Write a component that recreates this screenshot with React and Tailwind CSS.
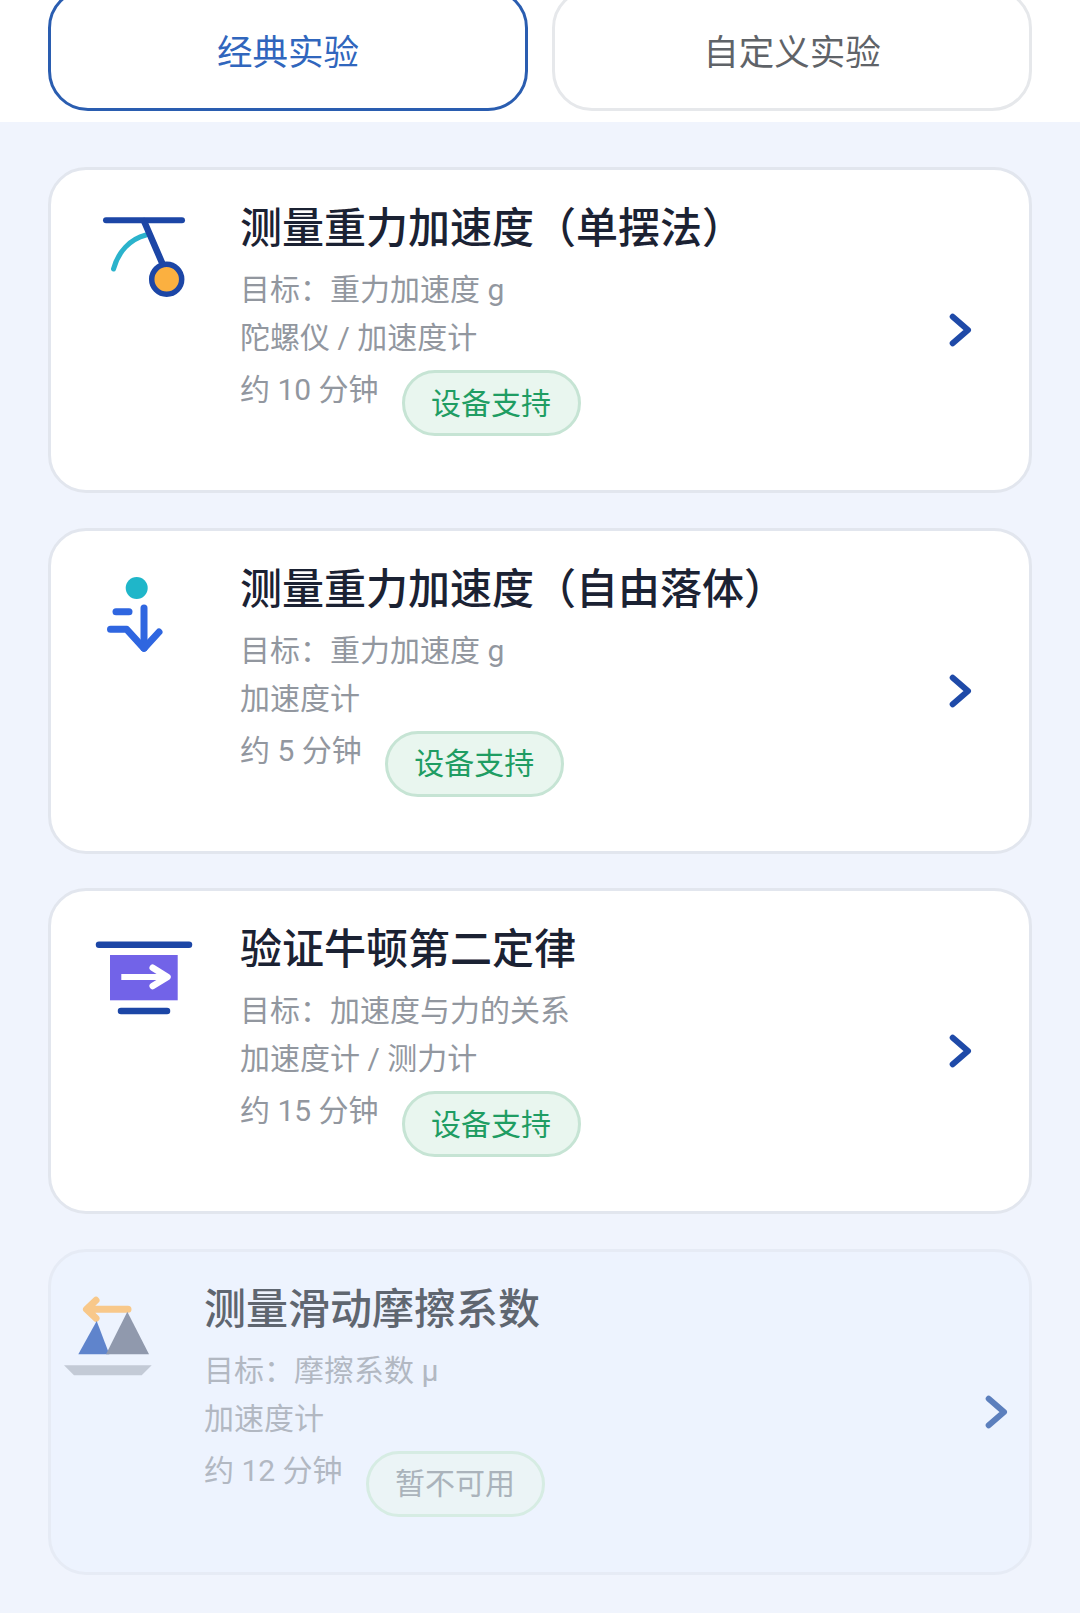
import React from 'react';

const FONT = 'font-[Roboto,"Noto_Sans_CJK_SC",sans-serif]';

const PendulumIcon = () => (
  <svg width="130" height="120" viewBox="0 0 130 120" fill="none" strokeLinecap="round">
    <path d="M33.5 79C38 62 50 49 66 45" stroke="#2bb3cc" strokeWidth="5" />
    <path d="M64 31L83 75" stroke="#1c46a6" strokeWidth="6.5" />
    <path d="M26 30.3H102" stroke="#1c46a6" strokeWidth="6" />
    <circle cx="86.7" cy="89.3" r="15" fill="#fbb040" stroke="#1c46a6" strokeWidth="5.5" />
  </svg>
);

const FreeFallIcon = () => (
  <svg width="130" height="120" viewBox="0 0 130 120" fill="none" strokeLinecap="round" strokeLinejoin="round">
    <circle cx="56.7" cy="37" r="11" fill="#1fb6c9" />
    <path d="M64 57V97" stroke="#2f66e0" strokeWidth="7" />
    <path d="M30.5 78.3H46.7L64 97.3L79 81" stroke="#2f66e0" strokeWidth="7" />
    <path d="M36 60.7H49" stroke="#2f66e0" strokeWidth="7" />
  </svg>
);

const NewtonIcon = () => (
  <svg width="130" height="120" viewBox="0 0 130 120" fill="none" strokeLinecap="round" strokeLinejoin="round">
    <path d="M19 33.7H109" stroke="#1c46a6" strokeWidth="6.5" />
    <rect x="30" y="44" width="67.7" height="45.3" fill="#7263e8" />
    <path d="M41.3 66H87" stroke="#ffffff" strokeWidth="6" strokeLinecap="butt" />
    <path d="M72.7 56.7L87.5 66L72.7 75" stroke="#ffffff" strokeWidth="6.5" />
    <path d="M41 100H87" stroke="#1c46a6" strokeWidth="6.5" />
  </svg>
);

const FrictionIcon = () => (
  <svg width="130" height="120" viewBox="0 0 130 120" fill="none">
    <path d="M77 37.3H36M45 28.3L35.5 37.3L45 46.3" stroke="#f8c88a" strokeWidth="7" strokeLinecap="round" strokeLinejoin="round" />
    <path d="M27.3 82.3L45.7 49L58.3 82.3Z" fill="#5f84cc" />
    <path d="M55 82.3L76.3 39.7L98 82.3Z" fill="#9099ad" />
    <path d="M13 93.3H100.7L90.7 103.3H23Z" fill="#c3cad6" />
  </svg>
);

const Chevron = ({ color }) => (
  <svg width="24" height="36" viewBox="0 0 24 36" fill="none">
    <path d="M4.7 4.7L20 18L4.7 31.3" stroke={color} strokeWidth="6" strokeLinecap="round" strokeLinejoin="round" />
  </svg>
);

const EXPERIMENTS = [
  { id: 'pendulum', title: '测量重力加速度（单摆法）', goal: '目标：重力加速度 g', sensor: '陀螺仪 / 加速度计', time: '约 10 分钟', Icon: PendulumIcon },
  { id: 'fall', title: '测量重力加速度（自由落体）', goal: '目标：重力加速度 g', sensor: '加速度计', time: '约 5 分钟', Icon: FreeFallIcon },
  { id: 'newton', title: '验证牛顿第二定律', goal: '目标：加速度与力的关系', sensor: '加速度计 / 测力计', time: '约 15 分钟', Icon: NewtonIcon },
];

const ExperimentCard = ({ exp }) => {
  const { Icon } = exp;
  return (
    <div className="flex h-[326px] items-start rounded-[38px] border-[3px] border-[#e2e6ee] bg-white pr-[57px]">
      <div className="ml-[29px] mt-[20px] w-[160px] shrink-0">
        <Icon />
      </div>
      <div className="min-w-0 flex-1 pt-[31px]">
        <h3 className="text-[42px] leading-[56px] font-medium text-[#1b2233]">{exp.title}</h3>
        <p className="mt-[9px] text-[30px] leading-[48px] text-[#92979f]">{exp.goal}</p>
        <p className="text-[30px] leading-[48px] text-[#92979f]">{exp.sensor}</p>
        <div className="mt-[4px] flex items-start gap-[23px]">
          <span className="text-[30px] leading-[48px] text-[#92979f]">{exp.time}</span>
          <span className="mt-[4px] flex h-[66px] w-[179px] items-center justify-center rounded-[33px] border-[3px] border-[#c6e4d4] bg-[#e9f6ef] text-[30px] text-[#1f9d63]">设备支持</span>
        </div>
      </div>
      <div className="flex h-full items-center">
        <Chevron color="#1f4aa8" />
      </div>
    </div>
  );
};

export default function App() {
  return (
    <div className={`${FONT} min-h-[1613px] overflow-hidden bg-[#f0f4fd]`}>
      <div className="flex h-[122px] items-start gap-[24px] bg-white px-[48px]">
        <button type="button" className="-mt-[12px] flex h-[123px] w-[480px] items-center justify-center rounded-[40px] border-[3px] border-[#2a5db0] pt-[8px] text-[35.5px] text-[#3066bd]">经典实验</button>
        <button type="button" className="-mt-[12px] flex h-[123px] w-[480px] items-center justify-center rounded-[40px] border-[3px] border-[#e6e8eb] pt-[8px] text-[35.5px] text-[#5f6368]">自定义实验</button>
      </div>

      <div className="flex flex-col gap-[34.5px] px-[48px] pt-[45px]">
        {EXPERIMENTS.map((exp) => <ExperimentCard key={exp.id} exp={exp} />)}

        {/* disabled card sits wider than the others */}
        <div className="flex h-[326px] items-start rounded-[38px] border-[3px] border-[#e6ebf5] bg-[#edf3fe] pr-[21px]">
          <div className="mt-[20px] w-[153px] shrink-0">
            <FrictionIcon />
          </div>
          <div className="min-w-0 flex-1 pt-[30px]">
            <h3 className="text-[42px] leading-[56px] font-medium text-[#5f6670]">测量滑动摩擦系数</h3>
            <p className="mt-[9px] text-[30px] leading-[48px] text-[#b2b8c2]">目标：摩擦系数 μ</p>
            <p className="text-[30px] leading-[48px] text-[#b2b8c2]">加速度计</p>
            <div className="mt-[4px] flex items-start gap-[23px]">
              <span className="text-[30px] leading-[48px] text-[#b2b8c2]">约 12 分钟</span>
              <span className="mt-[4px] flex h-[66px] w-[179px] items-center justify-center rounded-[33px] border-[3px] border-[#d6ece3] bg-[#ebf4f6] text-[30px] text-[#aab3bb]">暂不可用</span>
            </div>
          </div>
          <div className="flex h-full items-center">
            <Chevron color="#5c7fbd" />
          </div>
        </div>
      </div>
    </div>
  );
}
